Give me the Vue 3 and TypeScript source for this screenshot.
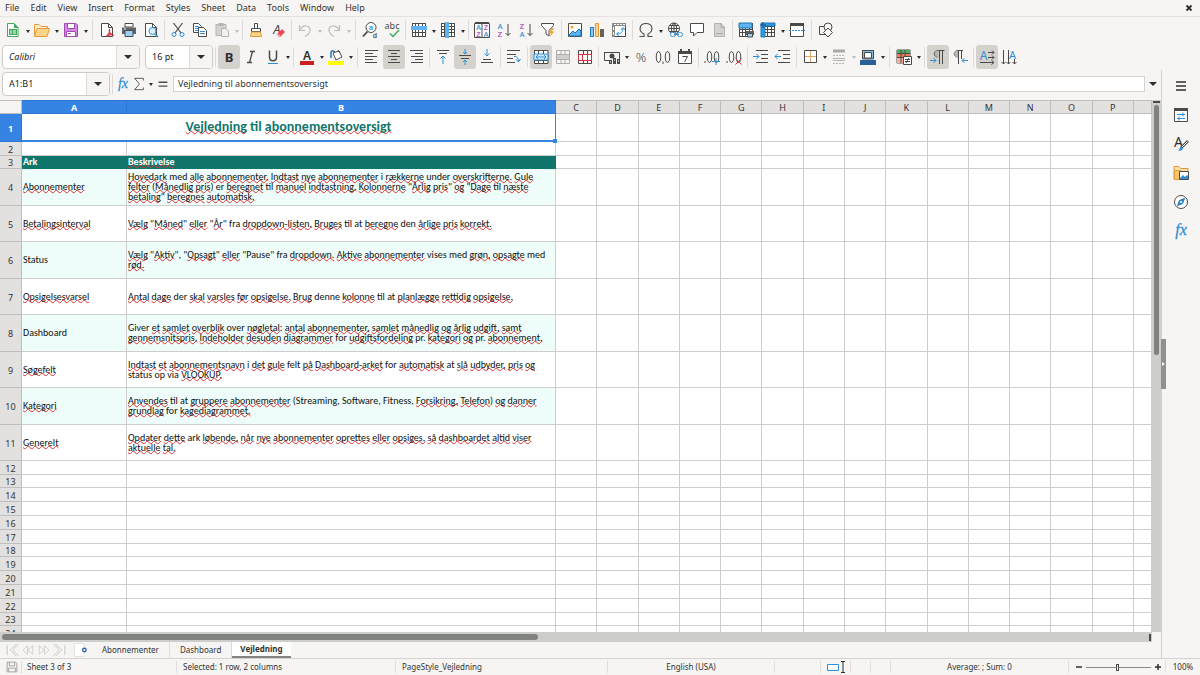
<script setup lang="ts">
import { ref } from 'vue'

interface Tool {
  icon?: string
  label?: string
  sep?: boolean
  wide?: boolean
  menu?: boolean
  active?: boolean
  off?: boolean
}
interface Segment { text: string; bad: boolean }
interface Row { n: number; h: string; a: string; b: string[]; band: boolean }

const menus = ['File', 'Edit', 'View', 'Insert', 'Format', 'Styles', 'Sheet', 'Data', 'Tools', 'Window', 'Help']

const dark = '#4a4a48'
const blue = '#2f8fd4'
const grid = (color: string) => `<path d="M1 1.500H15M1 4.500H15M1 7.500H15M1 10.500H15M1 14.500H15M1.500 1V15M4.500 1V15M7.500 1V15M11.500 1V15M14.500 1V15" fill="none" stroke="${color}"/>`
const lines = (d: string, color = dark) => `<path d="${d}" fill="none" stroke="${color}"/>`
const page = `<path d="M2.500 1.500H9.500L13.500 5.500V14.500H2.500Z" fill="#fff" stroke="${dark}"/><path d="M9.500 1.500V5.500H13.500" fill="none" stroke="${dark}"/>`
const glyph = (x: number, y: number, s: number, t: string, fill = dark, extra = '') =>
  `<text x="${x}" y="${y}" font-size="${s}" font-family="Noto Sans, sans-serif" text-anchor="middle" fill="${fill}" ${extra}>${t}</text>`
const tiny = (x: number, y: number, t: string, fill = dark) =>
  `<text x="${x}" y="${y}" font-size="7" font-family="Liberation Sans, sans-serif" text-anchor="middle" fill="${fill}" stroke="${fill}" stroke-width=".2">${t}</text>`
const purple = '#a844b8'
const fx = `<text x="8" y="12" font-size="16" font-style="italic" font-family="Liberation Serif, serif" text-anchor="middle" fill="${blue}" stroke="${blue}" stroke-width=".3">fx</text>`

const icons: Record<string, string> = {
  new: `<path d="M2.500 1.500H9L13 5.500V14.500H2.500Z" fill="#fff" stroke="#3faa5c"/><path d="M9 1V6H13.500Z" fill="#3faa5c"/><path d="M4 7H12V13H4Z" fill="#3faa5c"/><path d="M5 9H7M8 9H11M5 11H7M8 11H11" stroke="#fff"/>`,
  open: `<path d="M.5 13.500V2.500H5L7 4.500H13.500V7" fill="#fff0d0" stroke="#e29a3d"/><path d="M.5 14.500 3 6.500H15.500L13 14.500Z" fill="#fcd58a" stroke="#e29a3d"/>`,
  save: `<path d="M1.500 1.500H13L14.500 3V14.500H1.500Z" fill="#d58ae0" stroke="#9c4bb0"/><path d="M4.500 1.500H11.500V6.500H4.500ZM3.500 9.500H12.500V14.500H3.500Z" fill="#fff" stroke="#9c4bb0"/><path d="M5 11.500H8" stroke="#9c4bb0"/>`,
  pdf: `${page}<path d="M7 14.500C10 12 11 9 10.500 7.500C9 10 12 13 15 13.500C12 12 9 13 7 14.500Z" fill="#fff" stroke="#d8323e" stroke-width="1.200"/>`,
  print: `<path d="M4 1.500H12V5H4Z" fill="#fff" stroke="${dark}"/><path d="M1 5.500H15V12H1Z" fill="#606366"/><path d="M4 8.500H12V14.500H4Z" fill="#9ed0f5" stroke="${dark}"/><path d="M3 7H5" stroke="#fff"/>`,
  preview: `${page}<circle cx="9.500" cy="9" r="3.500" fill="#d8efff" stroke="${blue}"/><path d="M12 12 15 15" stroke="${blue}" stroke-width="1.500"/>`,
  cut: `<path d="M3.500 1 11 11M12.500 1 5 11" stroke="${dark}" stroke-width="1.200"/><circle cx="4" cy="12.500" r="2" fill="none" stroke="${blue}"/><circle cx="12" cy="12.500" r="2" fill="none" stroke="${blue}"/>`,
  copy: `<path d="M1.500 1.500H6.500L9.500 4.500V10.500H1.500Z" fill="#fff" stroke="${dark}"/><path d="M3 4.500H7M3 6.500H7M3 8.500H6" stroke="${blue}"/><path d="M6.500 5.500H11.500L14.500 8.500V14.500H6.500Z" fill="#fff" stroke="${dark}"/><path d="M8 9.500H13M8 11.500H13" stroke="${blue}"/>`,
  paste: `<path d="M2 2.500H12V13.500H2Z" fill="#d4d3d2" stroke="#b4b3b2"/><path d="M4.500 1H9.500V4H4.500Z" fill="#b4b3b2"/><path d="M7.500 6.500H12L14.500 9V14.500H7.500Z" fill="#f2f1f0" stroke="#b4b3b2"/>`,
  brush: `<path d="M6.500 1.500H9.500V6.500H6.500Z" fill="#fff" stroke="${dark}"/><path d="M3.500 6.500H12.500V9.500H3.500Z" fill="#fff" stroke="${dark}"/><path d="M3.500 10 2.500 14.500H13.500L12.500 10Z" fill="#fcd58a" stroke="#e29a3d"/>`,
  clear: `${glyph(7, 12, 13, 'A', dark, 'font-style="italic"')}<path d="M7 12 12 7 15 10 10 15Z" fill="#e94b55"/><path d="M7 12 10 15" stroke="#f8a9ad" stroke-width="2"/>`,
  undo: `<path d="M2.500 3V8.500H8M3 8C6 2 14 3 13 9C12.500 12 10 13 8 14.500" fill="none" stroke="#bebdbc" stroke-width="1.200"/>`,
  redo: `<path d="M13.500 3V8.500H8M13 8C10 2 2 3 3 9C3.500 12 6 13 8 14.500" fill="none" stroke="#bebdbc" stroke-width="1.200"/>`,
  find: `<circle cx="9" cy="5.500" r="5" fill="#fff" stroke="${dark}"/><path d="M5.500 9.500 1 14.500" stroke="${dark}" stroke-width="1.800"/>${tiny(9, 7.5, 'a', blue)}${tiny(13, 15.5, 'd')}`,
  spell: `<text x="8" y="7" font-size="9" font-family="Noto Sans, sans-serif" text-anchor="middle" fill="${dark}">abc</text><path d="M6 11.500 9 14.500 15 8" fill="none" stroke="#3faa5c" stroke-width="1.500"/>`,
  rows: `<path d="M1 1H15V15H1Z" fill="#fff"/>${grid(dark)}<path d="M0 4H16V8H0Z" fill="#5db4f0"/>`,
  cols: `<path d="M1 1H15V15H1Z" fill="#fff"/>${grid(dark)}<path d="M5 0H9V16H5Z" fill="#5db4f0"/>`,
  sort: `<path d="M.5 1.500H15.500V15.500H.5Z" fill="#fff" stroke="${dark}"/><path d="M1 0H15V2H1Z" fill="${dark}"/><path d="M8 2V15" stroke="${dark}"/>${tiny(4.5, 8, 'A', blue)}${tiny(4.5, 15, 'Z', purple)}${tiny(12, 8, 'Z', purple)}${tiny(12, 15, 'A', blue)}`,
  asc: `${tiny(4, 6.5, 'A', blue)}${tiny(4, 15, 'Z', purple)}${lines('M12 2V13.500M9.500 11 12 13.500 14.500 11')}`,
  desc: `${tiny(4, 6.5, 'Z', purple)}${tiny(4, 15, 'A', blue)}${lines('M12 2V13.500M9.500 11 12 13.500 14.500 11')}`,
  filter: `<path d="M1.500 1.500H13.500V3.500L9 8.500V14L6 12V8.500L1.500 3.500Z" fill="#fff" stroke="${dark}"/><path d="M12 6 8.500 11H11L9.500 15 14.500 9.500H12L14 6Z" fill="#f4a53c"/>`,
  image: `<path d="M1.500 1.500H14.500V14.500H1.500Z" fill="#fff" stroke="${dark}"/><circle cx="5" cy="5" r="1.600" fill="#f4a53c"/><path d="M2 13 6 9 8 11 12 7 14 9V14H2Z" fill="#5db4f0" stroke="#1f76b8"/>`,
  chart: `<path d="M1.500 5.500H4.500V14.500H1.500Z" fill="#8ccbf6" stroke="#1f76b8"/><path d="M6.500 1.500H9.500V14.500H6.500Z" fill="#fcd58a" stroke="#e29a3d"/><path d="M11 7H15V15H11Z" fill="#66625c"/>`,
  pivot: `<path d="M1.500 1.500H14.500V14.500H1.500Z" fill="#fff" stroke="${dark}"/><path d="M1 1H15V4H1ZM1 4H4V15H1Z" fill="#8a8a88"/><path d="M3 2.500H5M6 2.500H8M9 2.500H11M12 2.500H14M2.500 5V8M2.500 10V13" stroke="#fff"/><path d="M6 12C10 12 12 10 12 6M10 8 12 5.500 14 8M8 10 5.500 12 8 14" fill="none" stroke="${blue}"/>`,
  omega: `<path d="M1.500 14.500H6V12C0 9 1 1.500 8 1.500S16 9 10 12V14.500H14.500" fill="none" stroke="${dark}" stroke-width="1.100"/>`,
  link: `<circle cx="7" cy="6.500" r="5.500" fill="#fff" stroke="${dark}"/><path d="M1.500 6.500H12.500M7 1V12M2.500 3.500H11.500M2.500 9.500H11M7 1C3.500 4 3.500 9 7 12C10.500 9 10.500 4 7 1" fill="none" stroke="${dark}"/><rect x="3.500" y="10.500" width="5" height="4" rx="2" fill="#fff" stroke="${blue}"/><rect x="10.500" y="10.500" width="5" height="4" rx="2" fill="#fff" stroke="${blue}"/><path d="M7 12.500H12" stroke="${blue}"/>`,
  comment: `<path d="M1.500 1.500H14.500V10.500H8L4.500 14V10.500H1.500Z" fill="#fff" stroke="${dark}"/>`,
  footer: `<path d="M3.500 1.500H10L13.500 5V14.500H3.500Z" fill="#d4d3d2" stroke="#b4b3b2"/><path d="M10 1V5.500H14M5 11.500H12" fill="none" stroke="#aaa"/>`,
  printarea: `<path d="M1 1H14V13H1Z" fill="#fff"/>${grid(dark)}<path d="M1 1H14V6H1Z" fill="#5db4f0" stroke="#1f76b8"/><path d="M8 9H16V13H8Z" fill="#606366"/><path d="M9.500 11.500H14.500V15H9.500Z" fill="#9ed0f5" stroke="${dark}"/>`,
  freeze: `<path d="M1 1H15V15H1Z" fill="#fff"/>${grid(dark)}<path d="M1 1H15V4H5V15H1Z" fill="#2f9be6" stroke="#1f76b8"/><path d="M3 0V6M0 3H6" stroke="#174f80"/>`,
  split: `<path d="M1.500 1.500H14.500V14.500H1.500Z" fill="#fff" stroke="${dark}"/><path d="M1 1H15V4H1Z" fill="${dark}"/><path d="M0 8.500H16" stroke="${blue}" stroke-dasharray="2 1"/>`,
  shapes: `<path d="M1.500 4.500H8.500V12.500H1.500Z" fill="#f6f5f4" stroke="${dark}"/><circle cx="10" cy="5" r="4" fill="#f6f5f4" stroke="${dark}"/><path d="M10 6 14.500 10.500 10 15 5.500 10.500Z" fill="#f6f5f4" stroke="${dark}"/>`,
  bold: glyph(8, 13, 13, 'B', '#2e2e2d', 'font-weight="700"'),
  italic: `<path d="M7 2.500H12M4 13.500H9M9.500 2.500 6.500 13.500" fill="none" stroke="${dark}" stroke-width="1.300"/>`,
  underline: `<path d="M4.500 1.500V8C4.500 13 11.500 13 11.500 8V1.500" fill="none" stroke="${dark}" stroke-width="1.500"/><path d="M3 14.500H13" stroke="${blue}"/>`,
  color: `${glyph(8, 10.5, 12, 'A', '#2e2e2d', 'font-weight="600"')}<path d="M1 12H15V16H1Z" fill="#c9211e"/>`,
  fill: `<path d="M3 9V4C3 1 6 1 7 4" fill="none" stroke="#1f76b8" stroke-width="1.500"/><path d="M5 4 11 2 14 8 8 11Z" fill="#fff" stroke="${dark}"/><path d="M10 1 12 4" stroke="${dark}"/><path d="M0 12H16V16H0Z" fill="#ffff00"/>`,
  left: lines('M1 1.500H14M1 4.500H9M1 7.500H13M1 10.500H9M1 13.500H13'),
  center: lines('M2 1.500H14M5 4.500H11M2 7.500H14M5 10.500H11M2 13.500H14'),
  right: lines('M2 1.500H15M7 4.500H15M3 7.500H15M7 10.500H15M3 13.500H15'),
  top: lines('M2 1.500H14M4 4.500H12') + lines('M8 15V7M5.500 9.500 8 7 10.500 9.500', blue),
  middle: lines('M2 6.500H14M4 9.500H12') + lines('M8 0V5M6 3 8 5 10 3M8 16V11M6 13 8 11 10 13', blue),
  bottom: lines('M4 10.500H12M2 13.500H14') + lines('M8 0V7M5.500 4.500 8 7 10.500 4.500', blue),
  wrap: lines('M1 1.500H14M1 5.500H10M1 9.500H7M1 13.500H9') + lines('M8 7.500C11 7 12 9 12.500 12M10 10.500 12.500 13 14.500 10', blue),
  mergec: `<path d="M1 1H15V15H1Z" fill="#fff"/>${lines('M1 1.500H15V14.500H1.500V1M5.500 1V15M10.500 1V15M1 5.500H15M1 11.500H15')}<path d="M1 5H15V11H1Z" fill="#d7ecfb" stroke="${blue}"/>${lines('M3 8H13M5 6 3 8 5 10M11 6 13 8 11 10', blue)}`,
  merge: lines('M1.500 1.500H14.500V14.500H1.500ZM6 1V5M10 1V5M1 5.500H15M1 10.500H15M6 11V15M10 11V15', '#b0afae') + '<path d="M2 6H14V10H2Z" fill="#d0cfce"/>',
  unmerge: `${lines('M1.500 1.500H14.500V14.500H1.500ZM6.500 1V5M10.500 1V5M6.500 11V15M10.500 11V15')}<path d="M1.500 5.500H14.500V11.500H1.500ZM5.500 5V12M10.500 5V12" fill="#fff" stroke="#d8323e"/>`,
  currency: `${lines('M.5 3.500H15.500V11M.5 3V11.500H6')}<circle cx="8" cy="7" r="2.500" fill="${dark}"/><path d="M5 11H8V15H5ZM9 9H12V15H9ZM13 10H16V15H13Z" fill="${dark}"/><path d="M6 13H7M10 11H11M14 12H15" stroke="#fff"/>`,
  percent: glyph(8, 13, 13, '%', dark, 'font-weight="300"'),
  number: `${lines('M3.500 2.500C.5 2.500 .5 13.500 3.500 13.500S6.500 2.500 3.500 2.500M12.500 2.500C9.500 2.500 9.500 13.500 12.500 13.500S15.500 2.500 12.500 2.500M8 12.500V15')}`,
  date: `<path d="M1.500 2.500H14.500V14.500H1.500Z" fill="#fff" stroke="${dark}"/><path d="M1 2H15V5H1Z" fill="${dark}"/><path d="M4 0V3M12 0V3" stroke="${dark}" stroke-width="2"/>${lines('M5.500 7.500H10.500L7.500 13')}`,
  adddec: `${lines('M1 12V14M5.500 2.500C2.500 2.500 2.500 13.500 5.500 13.500S8.500 2.500 5.500 2.500M12.500 2.500C9.500 2.500 9.500 13.500 12.500 13.500S15.500 2.500 12.500 2.500')}<path d="M8 12.500H16M12 9V16" stroke="${blue}"/>`,
  deldec: `${lines('M1 12V14M5.500 2.500C2.500 2.500 2.500 13.500 5.500 13.500S8.500 2.500 5.500 2.500M12.500 2.500C9.500 2.500 9.500 13.500 12.500 13.500S15.500 2.500 12.500 2.500')}<path d="M9.500 9.500 15.500 15.500M15.500 9.500 9.500 15.500" stroke="#e02f3c"/>`,
  indent: lines('M3 1.500H15M8 5.500H15M8 9.500H15M3 13.500H15') + lines('M0 7.500H6M3.500 5 6 7.500 3.500 10', blue),
  outdent: lines('M3 1.500H15M8 5.500H15M8 9.500H15M3 13.500H15') + lines('M6 7.500H0M2.500 5 0 7.500 2.500 10', blue),
  border: `<path d="M2.500 1.500H14.500V13.500H2.500Z" fill="#fff" stroke="${dark}"/><path d="M8.500 2V13M3 7.500H14" stroke="#d9a868"/>`,
  bstyle: `<path d="M2 2H14" stroke="#aaa9a8" stroke-width="3"/><path d="M2 6.500H14M2 14.500H14" stroke="#b5b4b3" stroke-dasharray="2 1"/><path d="M2 9.500H14M2 11.500H14" stroke="#b5b4b3"/>`,
  bcolor: `<path d="M2.500 1.500H13.500V10H2.500Z" fill="#76bdf0" stroke="${dark}"/><path d="M4.500 3.500H11.500V9H4.500Z" fill="#fff" stroke="${dark}"/><path d="M0 11H16V16H0Z" fill="#2a6099"/>`,
  cond: `<path d="M1 1H14V14H1Z" fill="#fff" stroke="${dark}"/><path d="M1 1H14V4H1Z" fill="#4cae63"/><path d="M1 4H14V8H1Z" fill="#ee7b55"/><path d="M1 8H8V14H1Z" fill="#f7b2a2"/>${lines('M1 4.500H14M1 8.500H8M5 1V14M9 1V8')}<path d="M7.500 7.500H15.500V15.500H7.500Z" fill="#fff" stroke="${dark}"/>${lines('M9 10.500H14M9 12.500H14M13 9 10 14')}`,
  ltr: `${lines('M14.500 1.500H8C3 1.500 3 8 8 8M9.500 2V15M12.500 2V15')}<path d="M8.500 1.500C3.500 1 3.500 8 8.500 8Z" fill="#b7b3ae"/>${lines('M0 11.500H6M3.500 9 6 11.500 3.500 14', blue)}`,
  rtl: `${lines('M11 1.500H6C1 1.500 1 8 6 8M6.500 2V15M9.500 2V10')}<path d="M6 1.500C1 1 1 8 6 8Z" fill="#b7b3ae"/>${lines('M16 11.500H10M12.500 9 10 11.500 12.500 14', blue)}`,
  horiz: `${glyph(4.5, 11, 12, 'A', blue)}${lines('M9 3.500H15M13 1.500 15 3.500 13 5.500M9 8.500H15M13 6.500 15 8.500 13 10.500M1 13.500H15M12.500 11.500 15 13.500 12.500 15.500')}`,
  vert: `${glyph(11.5, 10, 11, 'A', blue)}${lines('M2.500 1V15M.5 13 2.500 15 4.500 13M7.500 1V15M5.500 13 7.500 15 9.500 13M13.500 10V15M11.500 13 13.500 15 15.500 13')}`,
  fx,
  sum: lines('M13 4V1.500H3L8.500 8 3 14.500H13V12'),
  equals: `<path d="M3 6H13M3 10.500H13" stroke="${dark}" stroke-width="1.500"/>`,
  hamburger: `<path d="M3 4H13M3 8H13M3 12H13" stroke="#2e2e2d" stroke-width="1.500"/>`,
  props: `<path d="M1.500 1.500H14.500V14.500H1.500Z" fill="#fff" stroke="${dark}"/><path d="M1 1H15V4H1Z" fill="${dark}"/>${lines('M4 7.500H12M10 5.500V9.500M4 11.500H12M6 9.500V13.500', blue)}`,
  styles: `${glyph(5.5, 11, 14, 'A', '#2e2e2d')}<path d="M15 5 8 12" stroke="${dark}" stroke-width="2.500"/><path d="M14.500 5.500 9 11" stroke="#fff"/><path d="M5 15C8 15 10 14 10 12L7.500 10.500C6.500 12 7 13 5 15Z" fill="#2f8fd4"/>`,
  gallery: `<path d="M1 14.500V1.500H6L7.500 3.500H15V6" fill="#fde2ad" stroke="#e29a3d"/><path d="M1.500 5.500H8V14.500H1.500Z" fill="#fcc56a" stroke="#e29a3d"/><path d="M6.500 6.500H15.500V14.500H6.500Z" fill="#fff" stroke="${dark}"/><path d="M7 13 10 10 12 12 14 10 15 11V14H7Z" fill="#2f8fd4"/>`,
  navigator: `<circle cx="8" cy="8" r="6.500" fill="#fff" stroke="${dark}"/><path d="M11.500 4.500 9.500 9.500 4.500 11.500 6.500 6.500Z" fill="#2f8fd4" stroke="#1f76b8"/><circle cx="8" cy="8" r="1" fill="#fff"/>`,
  disk: lines('M1.500 1.500H13L14.500 3V14.500H1.500ZM4.500 2V6.500H11.500V2M3.500 14V9.500H12.500V14', '#8b8a89'),
  addsheet: `<path d="M1.500 .5H12.500V15.500H1.500Z" fill="#fff" stroke="#dededd"/><circle cx="13" cy="8" r="2" fill="#fff" stroke="#2a62b0" stroke-width="1.500"/>`,
  first: lines('M2.500 2V14M13 1 6 8 13 15M15.500 1 9 8 15.500 15', '#c4c3c2'),
  prev: lines('M7.500 3 2 8 7.500 13ZM13.500 3 8 8 13.500 13Z', '#cfcecd'),
  next: lines('M2.500 3 8 8 2.500 13ZM8.500 3 14 8 8.500 13Z', '#cfcecd'),
  last: lines('M13.500 2V14M3 1 10 8 3 15M.5 1 7 8 .5 15', '#c4c3c2'),
}

const sep: Tool = { sep: true }
const wide: Tool = { sep: true, wide: true }
const t = (icon: string, label: string, opt: Partial<Tool> = {}): Tool => ({ icon, label, ...opt })

const standard: Tool[] = [
  t('new', 'New', { menu: true }), t('open', 'Open', { menu: true }), t('save', 'Save', { menu: true }), wide,
  t('pdf', 'Export as PDF'), t('print', 'Print'), t('preview', 'Print Preview'), sep,
  t('cut', 'Cut'), t('copy', 'Copy'), t('paste', 'Paste', { menu: true, off: true }), sep,
  t('brush', 'Clone Formatting'), t('clear', 'Clear Formatting'), sep,
  t('undo', 'Undo', { menu: true, off: true }), t('redo', 'Redo', { menu: true, off: true }), wide,
  t('find', 'Find and Replace'), t('spell', 'Spelling'), sep,
  t('rows', 'Row', { menu: true }), t('cols', 'Column', { menu: true }), sep,
  t('sort', 'Sort'), t('asc', 'Sort Ascending'), t('desc', 'Sort Descending'), t('filter', 'AutoFilter'), sep,
  t('image', 'Insert Image'), t('chart', 'Insert Chart'), t('pivot', 'Pivot Table'), sep,
  t('omega', 'Special Character', { menu: true }), t('link', 'Hyperlink'), t('comment', 'Comment'), t('footer', 'Headers and Footers', { off: true }), sep,
  t('printarea', 'Define Print Area'), t('freeze', 'Freeze Rows and Columns', { menu: true }), t('split', 'Split Window'), wide,
  t('shapes', 'Show Draw Functions'),
]

const formatting: Tool[] = [
  t('bold', 'Bold', { active: true }), t('italic', 'Italic'), t('underline', 'Underline', { menu: true }), sep,
  t('color', 'Font Color', { menu: true }), t('fill', 'Background Color', { menu: true }), wide,
  t('left', 'Align Left'), t('center', 'Center Horizontally', { active: true }), t('right', 'Align Right'), sep,
  t('top', 'Align Top'), t('middle', 'Center Vertically', { active: true }), t('bottom', 'Align Bottom'), sep,
  t('wrap', 'Wrap Text'), sep,
  t('mergec', 'Merge and Center', { active: true }), t('merge', 'Merge Cells', { off: true }), t('unmerge', 'Unmerge Cells'), sep,
  t('currency', 'Currency', { menu: true }), t('percent', 'Percent'), t('number', 'Number'), t('date', 'Date'), sep,
  t('adddec', 'Add Decimal Place'), t('deldec', 'Delete Decimal Place'), sep,
  t('indent', 'Increase Indent'), t('outdent', 'Decrease Indent'), sep,
  t('border', 'Borders', { menu: true }), t('bstyle', 'Border Style', { menu: true, off: true }), t('bcolor', 'Border Color', { menu: true }), wide,
  t('cond', 'Conditional Formatting', { menu: true }), sep,
  t('ltr', 'Left-To-Right', { active: true }), t('rtl', 'Right-To-Left'), sep,
  t('horiz', 'Text Direction Horizontal', { active: true }), t('vert', 'Text Direction Vertical'),
]

const sideTools: Tool[] = [
  t('hamburger', 'Sidebar Settings'), t('props', 'Properties'), t('styles', 'Styles'),
  t('gallery', 'Gallery'), t('navigator', 'Navigator'), t('fx', 'Functions'),
]

const columns = 'CDEFGHIJKLMNOP'.split('')

// Words in square brackets are flagged by the spelling checker.
const rows: Row[] = [
  { n: 4, h: 'r37', band: true, a: '[Abonnementer]', b: ['[Hovedark] med [alle] [abonnementer.] [Indtast] [nye] [abonnementer] i [rækkerne] under [overskrifterne.] [Gule]', '[felter] ([Månedlig] [pris]) er [beregnet] til [manuel] [indtastning.] [Kolonnerne] "[Årlig] [pris]" [og] "[Dage] til [næste]', '[betaling]" [beregnes] [automatisk.]'] },
  { n: 5, h: 'r36', band: false, a: '[Betalingsinterval]', b: ['[Vælg] "[Måned]" [eller] "[År]" fra [dropdown-listen.] [Bruges] til at [beregne] den [årlige] [pris] [korrekt.]'] },
  { n: 6, h: 'r37', band: true, a: 'Status', b: ['[Vælg] "[Aktiv]", "[Opsagt]" [eller] "Pause" fra [dropdown.] [Aktive] [abonnementer] vises med [grøn,] [opsagte] med', '[rød.]'] },
  { n: 7, h: 'r36', band: false, a: '[Opsigelsesvarsel]', b: ['[Antal] [dage] der [skal] [varsles] [før] [opsigelse.] [Brug] denne [kolonne] til at [planlægge] [rettidig] [opsigelse.]'] },
  { n: 8, h: 'r37', band: true, a: 'Dashboard', b: ['Giver [et] [samlet] [overblik] over [nøgletal]: [antal] [abonnementer,] [samlet] [månedlig] [og] [årlig] [udgift,] [samt]', '[gennemsnitspris.] [Indeholder] [desuden] [diagrammer] for [udgiftsfordeling] pr. [kategori] [og] pr. [abonnement.]'] },
  { n: 9, h: 'r36', band: false, a: '[Søgefelt]', b: ['[Indtast] [et] [abonnementsnavn] i [det] [gule] felt [på] [Dashboard-arket] for [automatisk] at [slå] [udbyder,] [pris] [og]', 'status op via [VLOOKUP.]'] },
  { n: 10, h: 'r37', band: true, a: '[Kategori]', b: ['[Anvendes] til at [gruppere] [abonnementer] (Streaming, Software, Fitness, [Forsikring,] [Telefon]) [og] [danner]', '[grundlag] for [kagediagrammet.]'] },
  { n: 11, h: 'r36', band: false, a: '[Generelt]', b: ['[Opdater] [dette] ark [løbende,] [når] [nye] [abonnementer] [oprettes] [eller] [opsiges,] [så] [dashboardet] [altid] [viser]', '[aktuelle] [tal.]'] },
]
const emptyRows = Array.from({ length: 13 }, (_, i) => i + 12)
const title = '[Vejledning] til [abonnementsoversigt]'

function segments(source: string): Segment[] {
  return source
    .split(/(\[[^\]]*\])/)
    .filter((part) => part !== '')
    .map((part) => (part.startsWith('[') ? { text: part.slice(1, -1), bad: true } : { text: part, bad: false }))
}

const sheets = ['Abonnementer', 'Dashboard', 'Vejledning']
const current = ref('Vejledning')
const fontName = ref('Calibri')
const fontSize = ref('16 pt')
const cellRef = ref('A1:B1')
const formula = ref('Vejledning til abonnementsoversigt')
const zoom = ref(49)
const navigation = [t('first', 'First Sheet'), t('prev', 'Previous Sheet'), t('next', 'Next Sheet'), t('last', 'Last Sheet')]
</script>

<template>
  <div class="window">
    <nav class="menubar" aria-label="Menu">
      <button v-for="m in menus" :key="m" class="menu">{{ m }}</button>
      <button class="close" aria-label="Close document">
        <svg viewBox="0 0 8 8" width="8" height="8"><path d="M1.500 1.500 6.500 6.500M6.500 1.500 1.500 6.500" stroke="#2e2e2d" stroke-width="1.800" /></svg>
      </button>
    </nav>

    <div class="toolbar first" role="toolbar" aria-label="Standard">
      <template v-for="(item, i) in standard" :key="i">
        <span v-if="item.sep" class="sep" :class="{ wide: item.wide }"></span>
        <template v-else>
          <button class="tool" :disabled="item.off" :aria-label="item.label">
            <svg viewBox="0 0 16 16" width="16" height="16" v-html="icons[item.icon!]"></svg>
          </button>
          <button v-if="item.menu" class="drop" :disabled="item.off" :aria-label="item.label + ' options'"></button>
        </template>
      </template>
    </div>

    <div class="toolbar second" role="toolbar" aria-label="Formatting">
      <div class="combo font">
        <input v-model="fontName" class="slanted" aria-label="Font Name" />
        <button class="pick" aria-label="Show fonts"></button>
      </div>
      <div class="combo size">
        <input v-model="fontSize" aria-label="Font Size" />
        <button class="pick" aria-label="Show sizes"></button>
      </div>
      <span class="sep"></span>
      <template v-for="(item, i) in formatting" :key="i">
        <span v-if="item.sep" class="sep" :class="{ wide: item.wide }"></span>
        <template v-else>
          <button class="tool" :class="{ active: item.active }" :disabled="item.off" :aria-label="item.label">
            <svg viewBox="0 0 16 16" width="16" height="16" v-html="icons[item.icon!]"></svg>
          </button>
          <button v-if="item.menu" class="drop" :disabled="item.off" :aria-label="item.label + ' options'"></button>
        </template>
      </template>
    </div>

    <div class="body">
      <main class="work">
        <div class="formulabar">
          <div class="combo cellref">
            <input v-model="cellRef" aria-label="Name Box" />
            <button class="pick" aria-label="Show ranges"></button>
          </div>
          <span class="sep"></span>
          <button class="small" aria-label="Function Wizard"><svg viewBox="0 0 16 16" width="14" height="14" v-html="icons.fx"></svg></button>
          <button class="small" aria-label="Select Function"><svg viewBox="0 0 16 16" width="14" height="14" v-html="icons.sum"></svg></button>
          <button class="drop" aria-label="Function list"></button>
          <button class="small equals" aria-label="Formula"><svg viewBox="0 0 16 16" width="14" height="14" v-html="icons.equals"></svg></button>
          <input v-model="formula" class="formula" aria-label="Input line" />
          <button class="expand" aria-label="Expand Formula Bar"></button>
        </div>

        <div class="sheetarea">
          <div class="sheet">
            <table>
              <colgroup>
                <col class="c-head" />
                <col class="c-a" />
                <col class="c-b" />
                <col v-for="c in columns" :key="c" />
                <col class="c-end" />
              </colgroup>
              <thead>
                <tr class="r14">
                  <th class="corner"></th>
                  <th class="selected" scope="col">A</th>
                  <th class="selected" scope="col">B</th>
                  <th v-for="c in columns" :key="c" scope="col">{{ c }}</th>
                  <th></th>
                </tr>
              </thead>
              <tbody>
                <tr class="r28">
                  <th class="selected" scope="row">1</th>
                  <td class="title" colspan="2">
                    <span v-for="(s, i) in segments(title)" :key="i" :class="{ bad: s.bad }">{{ s.text }}</span>
                    <i class="handle"></i>
                  </td>
                  <td v-for="c in 15" :key="c"></td>
                </tr>
                <tr class="r14">
                  <th scope="row">2</th>
                  <td v-for="c in 17" :key="c"></td>
                </tr>
                <tr class="r13">
                  <th scope="row">3</th>
                  <td class="heading">Ark</td>
                  <td class="heading"><span class="bad">Beskrivelse</span></td>
                  <td v-for="c in 15" :key="c"></td>
                </tr>
                <tr v-for="row in rows" :key="row.n" :class="row.h">
                  <th scope="row">{{ row.n }}</th>
                  <td :class="{ band: row.band }">
                    <span v-for="(s, i) in segments(row.a)" :key="i" :class="{ bad: s.bad }">{{ s.text }}</span>
                  </td>
                  <td :class="{ band: row.band }">
                    <div v-for="(line, k) in row.b" :key="k" class="line">
                      <span v-for="(s, i) in segments(line)" :key="i" :class="{ bad: s.bad }">{{ s.text }}</span>
                    </div>
                  </td>
                  <td v-for="c in 15" :key="c"></td>
                </tr>
                <tr v-for="n in emptyRows" :key="n" :class="n % 5 === 3 ? 'r13' : 'r14'">
                  <th scope="row">{{ n }}</th>
                  <td v-for="c in 17" :key="c"></td>
                </tr>
              </tbody>
            </table>
          </div>
          <div class="vscroll"><div class="vend"></div><div class="vthumb"></div></div>
        </div>
        <div class="hscroll"><div class="hthumb"></div><div class="hend"></div></div>

        <div class="tabs">
          <button v-for="n in navigation" :key="n.icon" class="nav" :aria-label="n.label">
            <svg viewBox="0 0 16 16" width="14" height="14" v-html="icons[n.icon!]"></svg>
          </button>
          <button class="add" aria-label="Add Sheet"><svg viewBox="0 0 16 16" width="14" height="14" v-html="icons.addsheet"></svg></button>
          <div class="tablist" role="tablist">
            <button
              v-for="s in sheets" :key="s" class="tab" role="tab"
              :class="{ current: s === current }" :aria-selected="s === current" @click="current = s"
            >{{ s }}</button>
          </div>
        </div>
      </main>

      <aside class="sidebar">
        <button v-for="s in sideTools" :key="s.icon" class="side" :aria-label="s.label">
          <svg viewBox="0 0 16 16" width="16" height="16" v-html="icons[s.icon!]"></svg>
        </button>
        <button class="grip" aria-label="Hide sidebar"></button>
      </aside>
    </div>

    <footer class="status">
      <span class="cell s-save"><svg viewBox="0 0 16 16" width="12" height="12" v-html="icons.disk"></svg></span>
      <span class="cell s-sheet">Sheet 3 of 3</span>
      <span class="cell s-sel">Selected: 1 row, 2 columns</span>
      <span class="cell s-style">PageStyle_Vejledning</span>
      <span class="cell s-lang">English (USA)</span>
      <span class="cell s-gap"></span>
      <span class="cell s-mode">
        <svg viewBox="0 0 20 12" width="20" height="12"><path d="M1.500 3.500H12.500V9.500H1.500Z" fill="#fff" stroke="#2f8fd4" /><path d="M15 .5H19M15 11.500H19M17 1V11" stroke="#2e2e2d" fill="none" /></svg>
      </span>
      <span class="cell s-tiny"></span>
      <span class="cell s-tiny"></span>
      <span class="cell s-avg">Average: ; Sum: 0</span>
      <span class="cell s-zoom">
        <button class="step" aria-label="Zoom Out"><svg viewBox="0 0 8 8" width="8" height="8"><path d="M1 4H7" stroke="#2e2e2d" stroke-width="1.500" /></svg></button>
        <input v-model="zoom" type="range" min="0" max="100" aria-label="Zoom" />
        <button class="step" aria-label="Zoom In"><svg viewBox="0 0 8 8" width="8" height="8"><path d="M1 4H7M4 1V7" stroke="#2e2e2d" stroke-width="1.500" /></svg></button>
      </span>
      <span class="percent">100%</span>
    </footer>
  </div>
</template>

<style>
html, body { margin: 0; background: #f6f5f4; }
</style>

<style scoped>
.window {
  display: flex; flex-direction: column; height: 100vh; overflow: hidden;
  background: #f6f5f4; color: #333332; font: 9px/12px "Noto Sans", "Open Sans", sans-serif;
}
button, input { font: inherit; color: inherit; margin: 0; padding: 0; border: 0; background: none; min-width: 0; }
svg { display: block; overflow: visible; }
.menubar { display: flex; align-items: center; gap: 1px; height: 16px; padding: 0 7px 0 0; border-bottom: 1px solid #e4e3e1; flex: none; }
.menu { padding: 0 5px; }
.close { margin-left: auto; }
.toolbar { display: flex; align-items: center; flex: none; padding-left: 2px; }
.toolbar.first { height: 26px; }
.toolbar.second { height: 27px; }
.tool { width: 22px; height: 24px; display: flex; align-items: center; justify-content: center; border-radius: 3px; flex: none; }
.tool.active { background: #d5d1cd; }
.drop { width: 7px; height: 20px; display: flex; align-items: center; justify-content: center; flex: none; }
.drop::after { content: ""; border: 2px solid transparent; border-top: 3px solid #2e2e2d; border-bottom: 0; margin-top: 2px; }
.drop:disabled::after { border-top-color: #bebdbc; }
.sep { width: 5px; height: 20px; flex: none; background: linear-gradient(#dedcda, #dedcda) center / 1px 100% no-repeat; }
.sep.wide { width: 7px; }
.combo { display: flex; box-sizing: border-box; height: 24px; border: 1px solid #cfcac6; border-radius: 4px; background: #fff; overflow: hidden; flex: none; }
.combo input { flex: 1; padding-left: 6px; color: #1e1e1d; }
.combo .pick { width: 23px; display: flex; align-items: center; justify-content: center; background: #f6f5f4; border-left: 1px solid #dedbd8; }
.pick::after, .expand::after { content: ""; border: 4px solid transparent; border-top-color: #2e2e2d; border-bottom: 0; }
.combo.font { width: 138px; margin-right: 5px; }
.combo.size { width: 68px; }
.combo.cellref { width: 108px; }
.slanted { font-style: italic; }

.body { display: flex; flex: 1; min-height: 0; }
.work { display: flex; flex-direction: column; flex: 1; min-width: 0; }
.formulabar { display: flex; align-items: center; height: 27px; padding-left: 2px; margin-bottom: 3px; flex: none; }
.small { width: 16px; height: 20px; display: flex; align-items: center; justify-content: center; flex: none; }
.small.equals { width: 18px; }
.formula { flex: 1; height: 14px; margin-left: 1px; padding: 0 4px; border: 1px solid #d5d2cf; background: #fff; }
.expand { width: 16px; height: 20px; display: flex; align-items: center; justify-content: center; }

.sheetarea { display: flex; flex: 1; min-height: 0; }
.sheet { flex: 1; min-width: 0; overflow: hidden; background: #fff; }
table { width: 100%; table-layout: fixed; border-collapse: separate; border-spacing: 0; }
.c-head { width: 22px; }
.c-a { width: 105px; }
.c-b { width: 429px; }
.c-end { width: 18px; }
th, td { box-sizing: border-box; padding: 0; border: solid #cdcdcc; border-width: 0 1px 1px 0; overflow: hidden; }
th { font-weight: 400; background: #e2e1df; border-color: #bfbebc; text-align: center; line-height: 11px; padding-top: 1px; }
thead th { border-top: 1px solid #bfbebc; line-height: 11px; }
th.corner { background: #f6f5f4; }
th.selected { background: #3584e4; border-color: #2a76d2; color: #fff; font-weight: 700; }
td { padding-left: 1px; font: 10px/10px Carlito, Lato, sans-serif; color: #111; vertical-align: middle; white-space: nowrap; }
.r13 { height: 13px; }
.r14 { height: 14px; }
.r28 { height: 28px; }
.r36 { height: 36px; }
.r37 { height: 37px; }
.band { background: #effdfa; }
.line { height: 10px; }
td.title {
  position: relative; overflow: visible; text-align: center; font-size: 14px; line-height: 18px; font-weight: 700;
  color: #13766c; border-color: #3584e4; border-width: 0 1px 2px 0; padding: 0;
}
td.heading { background: #10766c; color: #fff; font-weight: 700; border-color: #10766c; }
.handle { position: absolute; right: -2px; bottom: -3px; width: 4px; height: 4px; background: #3584e4; }
.bad { text-decoration: underline wavy #dc2f2f 1px; text-decoration-skip-ink: none; text-underline-offset: -1px; }

.vscroll { width: 9px; background: #cdcdcc; padding-top: 1px; box-sizing: border-box; flex: none; }
.vend { width: 7px; height: 2px; margin: 0 auto 2px; background: #4a4a48; }
.vthumb { width: 5px; height: 47%; margin: 0 auto; border-radius: 3px; background: #808280; }
.hscroll { display: flex; align-items: center; height: 10px; background: #cdcdcc; margin-right: 9px; flex: none; }
.hthumb { width: 46.5%; height: 6px; margin-left: 2px; border-radius: 3px; background: #808280; }
.hend { width: 2px; height: 7px; margin: 0 1px 0 auto; background: #4a4a48; }

.tabs { display: flex; height: 16px; padding-left: 4px; flex: none; font-size: 8px; }
.nav, .add { width: 16px; display: flex; align-items: center; justify-content: center; }
.add { margin-left: 4px; }
.tablist { display: flex; margin-left: 4px; }
.tab { padding: 0 10px; border-right: 1px solid #dedcda; line-height: 14px; }
.tab.current { padding: 0 8px; border: 0; border-bottom: 2px solid #858483; background: #fff; font-weight: 700; }

.sidebar { position: relative; width: 38px; padding-top: 1px; display: flex; flex-direction: column; align-items: center; border-left: 1px solid #d5d2cf; flex: none; box-sizing: content-box; }
.side { width: 24px; height: 29px; display: flex; align-items: center; justify-content: center; }
.grip { position: absolute; left: -1px; top: calc(50% - 25px); width: 5px; height: 50px; display: flex; align-items: center; background: #8f918f; }
.grip::after { content: ""; border: 2px solid transparent; border-left: 3px solid #fff; border-right: 0; margin-left: 1px; }

.status { display: flex; align-items: center; height: 16px; border-top: 1px solid #d5d2cf; flex: none; font-size: 8px; }
.cell { display: flex; align-items: center; box-sizing: border-box; height: 12px; border-right: 1px solid #e0dedc; white-space: nowrap; }
.s-save { width: 22px; padding-left: 6px; }
.s-sheet { width: 155px; padding-left: 5px; }
.s-sel { width: 219px; padding-left: 6px; }
.s-style { width: 212px; padding-left: 6px; }
.s-lang { width: 167px; justify-content: center; }
.s-gap { width: 46px; }
.s-mode { width: 30px; padding-left: 5px; }
.s-tiny { width: 20px; }
.s-avg { flex: 1; justify-content: center; }
.s-zoom { width: 97px; padding-left: 5px; gap: 2px; }
.step { width: 10px; display: flex; justify-content: center; }
.s-zoom input { appearance: none; width: 65px; height: 10px; background: linear-gradient(#8b8a89, #8b8a89) center / 100% 1px no-repeat; }
.s-zoom input::-webkit-slider-thumb { appearance: none; width: 3px; height: 7px; border: 1px solid #4a4a48; box-sizing: border-box; background: #f6f5f4; }
.percent { width: 34px; text-align: center; }
</style>
